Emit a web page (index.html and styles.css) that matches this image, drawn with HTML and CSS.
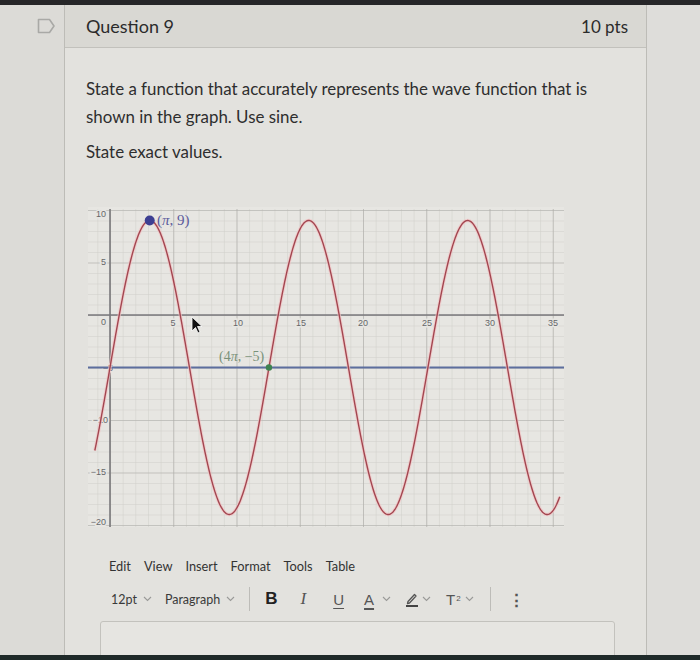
FILE: index.html
```html
<!DOCTYPE html>
<html>
<head>
<meta charset="utf-8">
<link rel="stylesheet" href="styles.css">
</head>
<body>
<div class="topbar"></div>
<div class="page">
  <div class="gutter">
    <svg class="flag" width="19" height="16" viewBox="0 0 19 16"><path d="M1.5 1.5 H12.5 L17 8 L12.5 14.5 H1.5 Z" fill="none" stroke="#a9a9a6" stroke-width="1.6" stroke-linejoin="round"/></svg>
  </div>
  <div class="card">
    <div class="card-head">
      <span class="q-title">Question 9</span>
      <span class="q-pts">10 pts</span>
    </div>
    <div class="card-body">
      <p class="q-text">State a function that accurately represents the wave function that is shown in the graph. Use sine.</p>
      <p class="q-text">State exact values.</p>
      <svg class="graph" width="476" height="320" viewBox="0 0 476 320">
        <defs>
          <pattern id="minor" x="22" y="108" width="12.65" height="10.5" patternUnits="userSpaceOnUse">
            <path d="M0 0 V10.5 M0 0 H12.65" stroke="#cfcec9" stroke-width="1" fill="none"/>
          </pattern>
          <pattern id="major" x="22" y="108" width="63.25" height="52.5" patternUnits="userSpaceOnUse">
            <path d="M0 0 V52.5 M0 0 H63.25" stroke="#acaba7" stroke-width="1.2" fill="none"/>
          </pattern>
        </defs>
        <rect x="0" y="0" width="476" height="320" fill="#e7e6e2"/>
        <rect x="0" y="2" width="476" height="318" fill="url(#minor)"/>
        <rect x="0" y="2" width="476" height="318" fill="url(#major)"/>
        <line x1="0" y1="108" x2="476" y2="108" stroke="#7a797c" stroke-width="1.6"/>
        <line x1="22" y1="2" x2="22" y2="320" stroke="#7a797c" stroke-width="1.6"/>
        <g class="ylab">
          <text x="18" y="10" text-anchor="end">10</text>
          <text x="18" y="58" text-anchor="end">5</text>
          <text x="18" y="118" text-anchor="end">0</text>
          <text x="25" y="164" text-anchor="end">−5</text>
          <text x="20" y="216" text-anchor="end">−10</text>
          <text x="18" y="268" text-anchor="end">−15</text>
          <text x="18" y="318" text-anchor="end">−20</text>
        </g>
        <g class="xlab">
          <text x="85" y="119" text-anchor="middle">5</text>
          <text x="150" y="119" text-anchor="middle">10</text>
          <text x="213" y="119" text-anchor="middle">15</text>
          <text x="275" y="119" text-anchor="middle">20</text>
          <text x="339" y="119" text-anchor="middle">25</text>
          <text x="402" y="119" text-anchor="middle">30</text>
          <text x="465" y="119" text-anchor="middle">35</text>
        </g>
        <line x1="0" y1="160.5" x2="476" y2="160.5" stroke="#5d6e9e" stroke-width="1.8"/>
        <path id="wave" d="" fill="none" stroke="#f2c3c4" stroke-width="3.4" opacity="0.7"/>
        <path id="wave2" d="" fill="none" stroke="#a34650" stroke-width="1.4"/>
        <circle cx="61.7" cy="13.5" r="5" fill="#3d3f92"/>
        <circle cx="180.96" cy="160.5" r="3.2" fill="#3f8350"/>
        <text class="ann-blue" x="69" y="18">(<tspan class="pi">π</tspan>, 9)</text>
        <text class="ann-green" x="131" y="154">(4<tspan class="pi">π</tspan>, −5)</text>
        <path d="M104 110 L104 124 L107.5 120.5 L110 126 L112 125 L109.5 119.5 L114 119.5 Z" fill="#111" stroke="#fff" stroke-width="0.8"/>
      </svg>
      <div class="editor">
        <div class="menubar">
          <span>Edit</span><span>View</span><span>Insert</span><span>Format</span><span>Tools</span><span>Table</span>
        </div>
        <div class="toolbar">
          <span class="tb-item">12pt <svg class="chev" width="9" height="6" viewBox="0 0 9 6"><path d="M1 1 L4.5 4.5 L8 1" fill="none" stroke="#9a9a98" stroke-width="1.1"/></svg></span>
          <span class="tb-item para">Paragraph <svg class="chev" width="9" height="6" viewBox="0 0 9 6"><path d="M1 1 L4.5 4.5 L8 1" fill="none" stroke="#9a9a98" stroke-width="1.1"/></svg></span>
          <span class="sep"></span>
          <span class="tb-b">B</span>
          <span class="tb-i">I</span>
          <span class="tb-u">U</span>
          <span class="tb-a">A<svg class="chev" width="9" height="6" viewBox="0 0 9 6"><path d="M1 1 L4.5 4.5 L8 1" fill="none" stroke="#9a9a98" stroke-width="1.1"/></svg></span>
          <span class="tb-pen"><svg width="14" height="16" viewBox="0 0 14 16"><path d="M3 10.5 L9.5 3.5 L11 5 L4.5 12 L2.5 12.5 Z" fill="none" stroke="#555" stroke-width="1.3" stroke-linejoin="round"/><rect x="1" y="14" width="12" height="2" fill="#444"/></svg><svg class="chev" width="9" height="6" viewBox="0 0 9 6"><path d="M1 1 L4.5 4.5 L8 1" fill="none" stroke="#9a9a98" stroke-width="1.1"/></svg></span>
          <span class="tb-t">T<sup>2</sup><svg class="chev" width="9" height="6" viewBox="0 0 9 6"><path d="M1 1 L4.5 4.5 L8 1" fill="none" stroke="#9a9a98" stroke-width="1.1"/></svg></span>
          <span class="sep sep2"></span>
          <span class="tb-more">⋮</span>
        </div>
        <div class="textarea"></div>
      </div>
    </div>
  </div>
  <div class="rightside"></div>
</div>
<div class="bottombar"></div>
<script src="graph.js"></script>
</body>
</html>
```

FILE: styles.css
```css
html, body {
  margin: 0;
  padding: 0;
}
body {
  width: 700px;
  height: 660px;
  overflow: hidden;
  background: #dddcd8;
  font-family: Lato, "Open Sans", sans-serif;
  color: #333;
  position: relative;
}
.topbar {
  height: 5px;
  background: #262628;
}
.page {
  display: flex;
  height: 655px;
  overflow: hidden;
}
.gutter {
  width: 64px;
  flex: none;
  background: #dcdbd7;
}
.flag {
  display: block;
  margin: 13px 0 0 37px;
}
.card {
  width: 581px;
  flex: none;
  border-left: 1px solid #bdbcb7;
  border-right: 1px solid #bdbcb7;
  background: #e3e2de;
  display: flex;
  flex-direction: column;
}
.card-head {
  flex: none;
  height: 42px;
  background: #d9d8d3;
  border-bottom: 1px solid #c2c1bc;
  display: flex;
  align-items: center;
  justify-content: space-between;
  padding: 0 18px 0 21px;
}
.q-title {
  font-size: 18px;
  color: #2b2b2b;
}
.q-pts {
  font-size: 17px;
  color: #2b2b2b;
}
.card-body {
  flex: none;
  padding: 27px 0 0 21px;
}
.q-text {
  margin: 0 0 7px;
  font-size: 16.9px;
  line-height: 28px;
  color: #2e2e2e;
  width: 520px;
}
.graph {
  display: block;
  margin: 41px 0 0 2px;
}
.ylab text, .xlab text {
  font-family: "Liberation Sans", Arial, sans-serif;
  font-size: 9px;
  fill: #66666a;
  paint-order: stroke;
  stroke: #e7e6e2;
  stroke-width: 3px;
}
.ann-blue {
  font-family: "Liberation Serif", serif;
  font-size: 15px;
  fill: #5b5b9c;
}
.ann-green {
  font-family: "Liberation Serif", serif;
  font-size: 14px;
  fill: #7a927a;
}
.pi {
  font-style: italic;
}
.editor {
  margin: 29px 0 0 14px;
  width: 515px;
}
.menubar {
  display: flex;
  gap: 13px;
  padding-left: 9px;
  font-size: 12.8px;
  color: #333;
  height: 20px;
  align-items: center;
}
.toolbar {
  display: flex;
  align-items: center;
  height: 26px;
  margin-top: 10px;
  padding-left: 11px;
  font-size: 12.5px;
  color: #3a3a3a;
}
.tb-item {
  display: flex;
  align-items: center;
  gap: 6px;
  margin-right: 13px;
}
.para {
  margin-right: 14px;
}
.chev {
  display: block;
}
.sep {
  width: 1px;
  height: 24px;
  background: #bdbcb8;
  margin-right: 15px;
}
.tb-b {
  font-family: "Liberation Sans", Arial, sans-serif;
  font-size: 17px;
  font-weight: 600;
  color: #222;
  margin-right: 23px;
}
.tb-i {
  font-family: "Liberation Serif", serif;
  font-style: italic;
  font-size: 17px;
  color: #555;
  margin-right: 27px;
}
.tb-u {
  font-family: "Liberation Sans", Arial, sans-serif;
  font-size: 15px;
  color: #555;
  text-decoration: underline;
  text-underline-offset: 3px;
  margin-right: 20px;
}
.tb-a {
  display: flex;
  align-items: center;
  gap: 8px;
  font-family: "Liberation Sans", Arial, sans-serif;
  font-size: 15px;
  color: #555;
  text-decoration: underline;
  text-decoration-thickness: 2px;
  text-underline-offset: 3px;
  margin-right: 14px;
}
.tb-pen {
  display: flex;
  align-items: center;
  gap: 3px;
  margin-right: 15px;
}
.tb-t {
  display: flex;
  align-items: center;
  gap: 4px;
  font-family: "Liberation Sans", Arial, sans-serif;
  font-size: 15px;
  color: #555;
  margin-right: 16px;
}
.tb-t sup {
  font-size: 8px;
  margin-left: -3px;
  align-self: flex-start;
  margin-top: 3px;
}
.sep2 {
  margin-right: 17px;
}
.tb-more {
  font-size: 17px;
  font-weight: 700;
  color: #555;
}
.textarea {
  margin-top: 9px;
  height: 60px;
  border: 1px solid #c3c2bd;
  border-radius: 3px;
  background: #e6e5e1;
}
.rightside {
  flex: 1;
  background: #dedddA;
}
.bottombar {
  position: absolute;
  left: 0;
  bottom: 0;
  width: 700px;
  height: 5px;
  background: #1f2a29;
}
```

FILE: graph.js
```js
(function () {
  var X = function (x) { return 22 + 12.65 * x; };
  var Y = function (y) { return 108 - 10.5 * y; };
  var d = '';
  for (var x = -1.2; x <= 35.6; x += 0.05) {
    d += (d ? 'L' : 'M') + X(x).toFixed(2) + ',' + Y(14 * Math.sin(x / 2) - 5).toFixed(2);
  }
  document.getElementById('wave').setAttribute('d', d);
  document.getElementById('wave2').setAttribute('d', d);
})();
```
